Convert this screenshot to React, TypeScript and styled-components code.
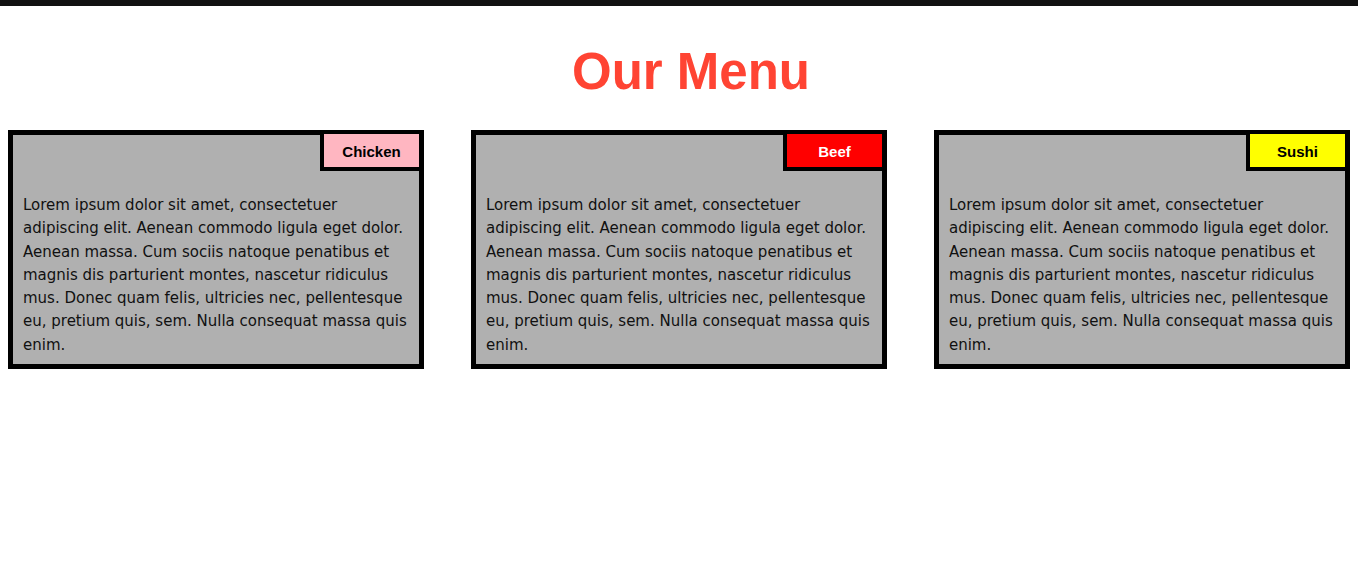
import React from "react";
import styled, { createGlobalStyle } from "styled-components";

const GlobalStyle = createGlobalStyle`
  html, body {
    margin: 0;
    padding: 0;
    background: #ffffff;
  }
  body {
    font-family: "Comic Sans MS", "DejaVu Sans", Verdana, sans-serif;
  }
`;

const Page = styled.div`
  border-top: 6px solid #111111;
  padding: 0 8px;
`;

const Title = styled.h1`
  margin: 0;
  padding: 46px 0 0 24px;
  height: 86px;
  box-sizing: border-box;
  text-align: center;
  font-family: "Comic Sans MS", "Liberation Sans", Arial, sans-serif;
  font-size: 51px;
  line-height: 40px;
  font-weight: 700;
  color: #ff4433;
`;

const CardRow = styled.div`
  display: flex;
  justify-content: space-between;
  margin-top: 38px;
`;

const Card = styled.section`
  width: 31%;
  box-sizing: border-box;
  border: 5px solid #000000;
  background: #b0b0b0;
  display: flex;
  flex-direction: column;
`;

const Tag = styled.div<{ $bg: string; $fg: string }>`
  align-self: flex-end;
  width: 95px;
  height: 33px;
  border-left: 4px solid #000000;
  border-bottom: 4px solid #000000;
  margin-top: -1px;
  background: ${(p) => p.$bg};
  color: ${(p) => p.$fg};
  font-family: "Comic Sans MS", "Liberation Sans", Arial, sans-serif;
  font-size: 15px;
  font-weight: 700;
  line-height: 35px;
  text-align: center;
`;

const Text = styled.p`
  margin: 23px 4px 7px 10px;
  font-family: "Comic Sans MS", "DejaVu Sans", Verdana, sans-serif;
  font-size: 15px;
  line-height: 23.3px;
  color: #111111;
`;

const LOREM =
  "Lorem ipsum dolor sit amet, consectetuer adipiscing elit. Aenean commodo ligula eget dolor. Aenean massa. Cum sociis natoque penatibus et magnis dis parturient montes, nascetur ridiculus mus. Donec quam felis, ultricies nec, pellentesque eu, pretium quis, sem. Nulla consequat massa quis enim.";

const items = [
  { name: "Chicken", bg: "#ffb6c1", fg: "#000000" },
  { name: "Beef", bg: "#ff0000", fg: "#ffffff" },
  { name: "Sushi", bg: "#ffff00", fg: "#000000" },
];

export default function App() {
  return (
    <>
      <GlobalStyle />
      <Page>
        <Title>Our Menu</Title>
        <CardRow>
          {items.map((it) => (
            <Card key={it.name}>
              <Tag $bg={it.bg} $fg={it.fg}>
                {it.name}
              </Tag>
              <Text>{LOREM}</Text>
            </Card>
          ))}
        </CardRow>
      </Page>
    </>
  );
}
